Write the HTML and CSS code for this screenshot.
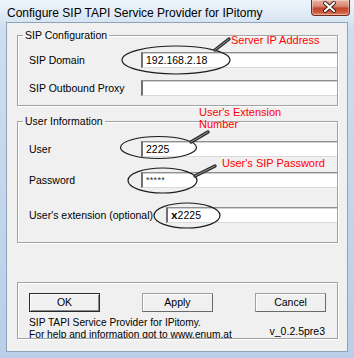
FILE: index.html
```html
<!DOCTYPE html>
<html>
<head>
<meta charset="utf-8">
<link rel="stylesheet" href="styles.css">
</head>
<body>
<div class="window">
  <div class="titlebar">
    <span class="title">Configure SIP TAPI Service Provider for IPitomy</span>
    <div class="close">
      <svg width="39" height="16" viewBox="0 0 39 16">
        <path d="M15 4 L24 12 M24 4 L15 12" stroke="#3a1a12" stroke-width="4" stroke-linecap="round"/>
        <path d="M15 4 L24 12 M24 4 L15 12" stroke="#ffffff" stroke-width="2.2" stroke-linecap="round"/>
      </svg>
    </div>
  </div>
  <div class="client">
    <fieldset class="group g1">
      <legend>SIP Configuration</legend>
      <div class="row"><span class="label">SIP Domain</span><div class="input">192.168.2.18</div></div>
      <div class="row r2"><span class="label">SIP Outbound Proxy</span><div class="input"></div></div>
    </fieldset>
    <fieldset class="group g2">
      <legend>User Information</legend>
      <div class="row"><span class="label">User</span><div class="input">2225</div></div>
      <div class="row r-pass"><span class="label">Password</span><div class="input pass">*****</div></div>
      <div class="row r-ext"><span class="label wide">User's extension (optional)</span><div class="input"><b class="x">x</b>2225</div></div>
    </fieldset>
    <div class="panel">
      <div class="buttons">
        <div class="btn default">OK</div>
        <div class="btn">Apply</div>
        <div class="btn">Cancel</div>
      </div>
      <div class="info">
        <div class="lines">
          <div class="line">SIP TAPI Service Provider for IPitomy.</div>
          <div class="line second">For help and information got to www.enum.at</div>
        </div>
        <div class="version">v_0.2.5pre3</div>
      </div>
    </div>
  </div>
  <svg class="annot" width="354" height="358" viewBox="0 0 354 358">
    <ellipse cx="176" cy="60" rx="54" ry="14" fill="none" stroke="#1b1b1b" stroke-width="1.2"/>
    <ellipse cx="158.5" cy="147.5" rx="38" ry="11" fill="none" stroke="#1b1b1b" stroke-width="1.2"/>
    <ellipse cx="162.5" cy="180.5" rx="34.5" ry="12.5" fill="none" stroke="#1b1b1b" stroke-width="1.2"/>
    <ellipse cx="187" cy="215.5" rx="33" ry="12.5" fill="none" stroke="#1b1b1b" stroke-width="1.2"/>
    <g stroke-linecap="round">
      <path d="M215 50 L229 39" stroke="#2a2a2a" stroke-width="3.4"/>
      <path d="M215 50 L229 39" stroke="#9a9a9a" stroke-width="1"/>
      <path d="M191 142 L208 132" stroke="#2a2a2a" stroke-width="3.4"/>
      <path d="M191 142 L208 132" stroke="#9a9a9a" stroke-width="1"/>
      <path d="M195 176 L215 166" stroke="#2a2a2a" stroke-width="3.4"/>
      <path d="M195 176 L215 166" stroke="#9a9a9a" stroke-width="1"/>
    </g>
  </svg>
  <span class="note n1">Server IP Address</span>
  <span class="note n2">User's Extension<br>Number</span>
  <span class="note n3">User's SIP Password</span>
</div>
</body>
</html>
```

FILE: styles.css
```css
* { box-sizing: border-box; }
html, body { margin: 0; padding: 0; }
body {
  width: 354px;
  height: 358px;
  overflow: hidden;
  font-family: "Liberation Sans", Arial, sans-serif;
  font-size: 10.5px;
  color: #000;
}
.window {
  position: relative;
  width: 354px;
  height: 358px;
  display: flex;
  flex-direction: column;
  padding: 0 6px 6px 6px;
  background: linear-gradient(180deg, #eef4fb 0px, #e2ecf7 12px, #cddeef 30px, #c3d6eb 200px, #b9cfe7 358px);
}
.titlebar {
  height: 22px;
  display: flex;
  align-items: flex-start;
  flex-shrink: 0;
}
.title {
  font-size: 12px;
  line-height: 14px;
  padding-top: 6px;
  padding-left: 1px;
  color: #000;
  white-space: nowrap;
}
.close {
  margin-left: auto;
  margin-right: -2px;
  width: 39px;
  height: 16px;
  border: 1px solid #6e2a1c;
  border-top: none;
  border-radius: 0 0 4px 4px;
  background: linear-gradient(180deg, #eab2a3 0%, #d98a76 40%, #c5452d 55%, #cc5a3a 80%, #e0866a 100%);
  box-shadow: inset 0 0 0 1px rgba(255,255,255,0.35);
  display: flex;
  align-items: center;
  justify-content: center;
}
.close svg { display: block; margin-left: -2px; margin-top: -1px; }
.client {
  flex: 1;
  background: #f0f0f0;
  border: 1px solid #8ea3ba;
  padding: 6px 9px 0 10px;
  display: flex;
  flex-direction: column;
}
.group {
  margin: 0;
  padding: 10px 0 9px 11px;
  border: 1px solid #a3a3a3;
  box-shadow: 1px 1px 0 #fff, inset 1px 1px 0 #fff;
}
.group legend {
  padding: 0 2px;
  margin-left: -6px;
  line-height: 13px;
  font-size: 10.5px;
}
.g2 {
  margin-top: 9px;
  padding-top: 13px;
  padding-bottom: 19px;
}
.row {
  display: flex;
  align-items: center;
  height: 16px;
}
.r2 { margin-top: 12px; }
.r-pass { margin-top: 15px; }
.r-ext { margin-top: 19px; }
.label {
  width: 112px;
  flex-shrink: 0;
  white-space: nowrap;
}
.label.wide { width: 137px; }
.input {
  flex: 1;
  height: 16px;
  background: #fff;
  border-top: 1px solid #8f8f8f;
  border-left: 2px solid #707070;
  border-bottom: 1px solid #dadada;
  box-shadow: inset 0 1px 0 #d0d0d0;
  padding-left: 3px;
  line-height: 14px;
  font-size: 10.5px;
  white-space: nowrap;
}
.input.pass { font-size: 9px; color: #333; letter-spacing: 0.3px; }
.x { font-weight: bold; font-family: "Liberation Mono", monospace; font-size: 11px; }
.panel {
  margin-top: 39px;
  height: 57px;
  border: 1px solid #a3a3a3;
  box-shadow: 1px 1px 0 #fff, inset 1px 1px 0 #fff;
  padding: 10px 11px 0 11px;
  overflow: hidden;
  display: flex;
  flex-direction: column;
}
.buttons {
  display: flex;
  gap: 42px;
}
.btn {
  width: 71px;
  height: 19px;
  border: 1px solid #a0a0a0;
  border-right-color: #6a6a6a;
  border-bottom-color: #6a6a6a;
  box-shadow: inset 1px 1px 0 #fff;
  background: #f0f0f0;
  text-align: center;
  line-height: 16px;
}
.btn.default {
  border: 1px solid #2a2a2a;
  box-shadow: inset 1px 1px 0 #fff, inset -1px -1px 0 #8a8a8a;
}
.info {
  display: flex;
  align-items: flex-start;
  margin-top: 6px;
}
.lines { flex: 1; }
.line {
  height: 10px;
  line-height: 10px;
  font-size: 10.2px;
  white-space: nowrap;
}
.line.second { margin-top: 1.5px; }
.version {
  line-height: 10px;
  margin-top: 8px;
  padding-right: 1px;
}
.annot {
  position: absolute;
  left: 0;
  top: 0;
  pointer-events: none;
}
.note {
  position: absolute;
  color: #ff0000;
  font-size: 11px;
  line-height: 12px;
  white-space: nowrap;
}
.n1 { left: 231px; top: 34px; }
.n2 { left: 199px; top: 106px; }
.n3 { left: 222px; top: 157px; }
```
